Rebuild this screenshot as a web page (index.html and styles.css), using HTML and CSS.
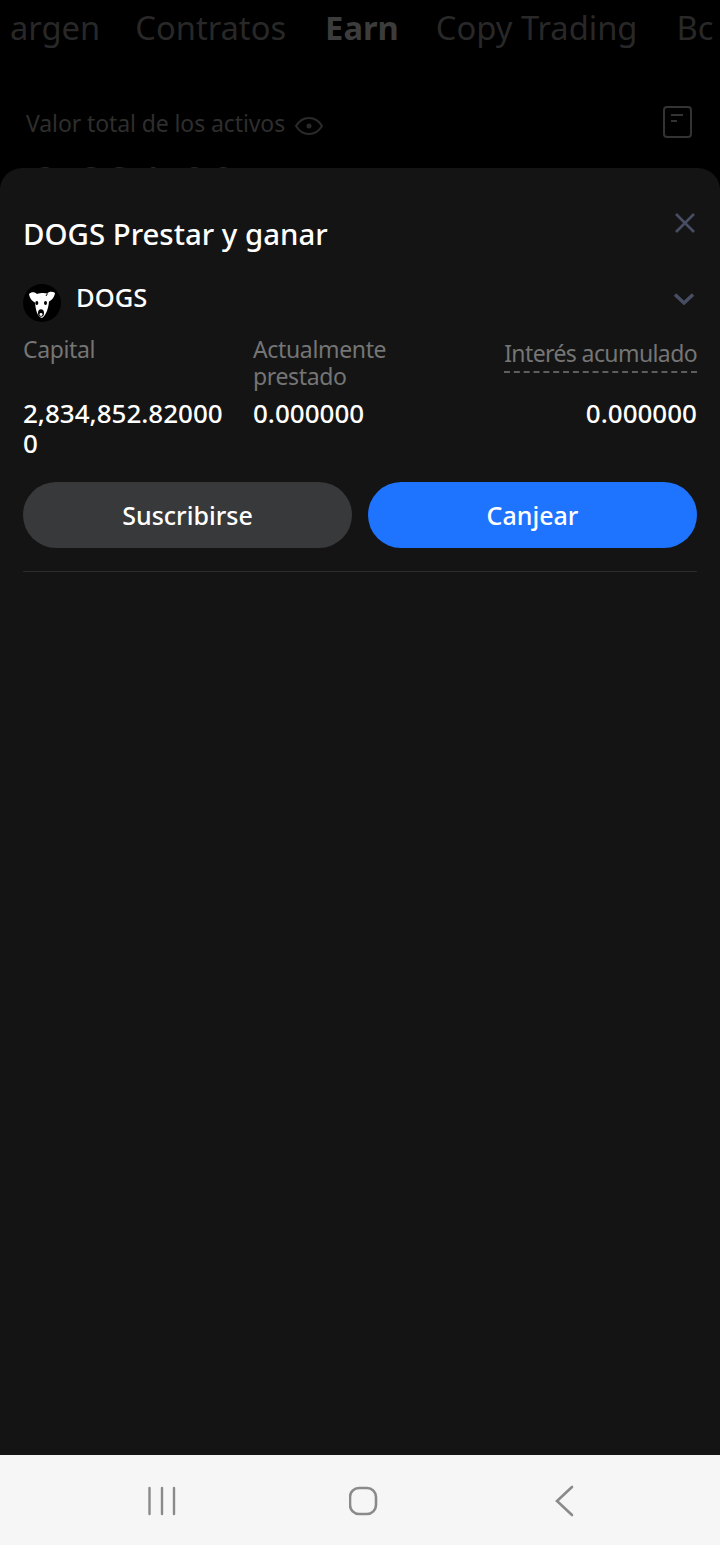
FILE: index.html
```html
<!DOCTYPE html>
<html lang="es">
<head>
  <meta charset="UTF-8">
  <title>DOGS Prestar y ganar</title>
  <link rel="stylesheet" href="styles.css">
</head>
<body>

<div class="screen">

  <!-- fondo oscurecido -->
  <div class="backdrop">
    <div class="tabs">
      <span class="tab-first">argen</span>
      <span>Contratos</span>
      <span class="tab-active">Earn</span>
      <span>Copy Trading</span>
      <span>Bc</span>
    </div>
    <div class="total-row">
      <span class="total-label">Valor total de los activos</span>
      <svg class="eye" width="30" height="22" viewBox="0 0 30 22" fill="none" stroke="#2a2a2a" stroke-width="2">
        <path d="M2 11c3-5 7-8 13-8s10 3 13 8c-3 5-7 8-13 8S5 16 2 11z"/>
        <circle cx="15" cy="11" r="2.5" fill="#2a2a2a" stroke="none"/>
      </svg>
      <svg class="doc" width="30" height="34" viewBox="0 0 30 34" fill="none" stroke="#333" stroke-width="2">
        <rect x="1" y="2" width="27" height="30" rx="3"/>
        <path d="M8 10h12M8 16h6"/>
      </svg>
    </div>
    <div class="balance">2,834.00</div>
  </div>

  <!-- hoja inferior -->
  <div class="sheet">
    <div class="sheet-head">
      <h1>DOGS Prestar y ganar</h1>
      <svg class="close" width="22" height="22" viewBox="0 0 22 22" fill="none" stroke="#474d63" stroke-width="2.6">
        <path d="M2 2l18 18M20 2L2 20"/>
      </svg>
    </div>

    <div class="coin-row">
      <div class="coin-name">
        <svg class="coin" width="38" height="38" viewBox="0 0 38 38">
          <circle cx="19" cy="19" r="19" fill="#000"/>
          <path d="M6 10C8.500 7.500 12 8 14 10c3-1 7-1.500 10-.5 2-2 5.500-2.500 8-.5-.5 4-3.500 7.500-6 8.500-.5 6-2.500 13.500-7 16.500-5-1-6.500-9.500-7-15.500-2.500-1-5.500-4.500-6-8.500z" fill="#fff"/>
          <path d="M24.500 9.500l-1.500 2.500" stroke="#000" stroke-width="1"/>
          <ellipse cx="13.800" cy="19" rx="1.500" ry="2" fill="#000"/>
          <ellipse cx="22.500" cy="19" rx="1.500" ry="2" fill="#000"/>
          <ellipse cx="18" cy="29" rx="3" ry="3.800" fill="#000"/>
          <ellipse cx="18" cy="30.500" rx="1.500" ry="1.400" fill="#fff"/>
        </svg>
        <span>DOGS</span>
      </div>
      <svg class="chevron" width="20" height="12" viewBox="0 0 20 12" fill="none" stroke="#474d63" stroke-width="3.400">
        <path d="M1 1.500l9 8.500 9-8.500"/>
      </svg>
    </div>

    <div class="stats">
      <div class="stat">
        <div class="stat-label">Capital</div>
        <div class="stat-value">2,834,852.820000</div>
      </div>
      <div class="stat">
        <div class="stat-label">Actualmente prestado</div>
        <div class="stat-value">0.000000</div>
      </div>
      <div class="stat stat-right">
        <div class="stat-label"><span class="dashed">Interés acumulado</span></div>
        <div class="stat-value">0.000000</div>
      </div>
    </div>

    <div class="buttons">
      <button class="btn btn-grey">Suscribirse</button>
      <button class="btn btn-blue">Canjear</button>
    </div>

    <div class="divider"></div>
  </div>

  <!-- barra de navegacion -->
  <div class="navbar">
    <svg width="30" height="30" viewBox="0 0 30 30" fill="none" stroke="#8a8a8a" stroke-width="2.400" stroke-linecap="round">
      <path d="M2.500 2v26M15 2v26M27 2v26"/>
    </svg>
    <svg width="30" height="30" viewBox="0 0 30 30" fill="none" stroke="#8a8a8a" stroke-width="2.600">
      <rect x="1" y="2" width="26" height="26" rx="9"/>
    </svg>
    <svg width="30" height="32" viewBox="0 0 30 32" fill="none" stroke="#8a8a8a" stroke-width="2.600" stroke-linecap="round">
      <path d="M22 2L7 16l15 14"/>
    </svg>
  </div>

</div>

</body>
</html>
```

FILE: styles.css
```css
/* base */
body {
  margin: 0;
  font-family: "Noto Sans", "Liberation Sans", sans-serif;
  background: #000;
}
.screen {
  width: 720px;
  height: 1545px;
  display: flex;
  flex-direction: column;
  overflow: hidden;
}

/* fondo oscurecido */
.backdrop {
  height: 168px;
  flex: none;
  background: #000;
  overflow: hidden;
}
.tabs {
  display: flex;
  gap: 39px;
  padding: 6px 0 0 10px;
  height: 47px;
  font-size: 32.7px;
  line-height: 44px;
  color: #282828;
  white-space: nowrap;
}
.tab-first {
  margin-right: -4px;
}
.tab-active {
  font-weight: bold;
  color: #3c3c3c;
  margin-right: -2px;
}
.total-row {
  display: flex;
  align-items: center;
  margin-top: 50px;
  padding: 0 27px 0 26px;
  height: 40px;
}
.total-label {
  font-size: 23px;
  letter-spacing: -0.1px;
  color: #2e2e2e;
}
.eye {
  margin-left: 9px;
  margin-top: 6px;
}
.doc {
  margin-left: auto;
  margin-top: -2px;
}
.balance {
  margin: 13px 0 0 34px;
  font-size: 40px;
  line-height: 50px;
  letter-spacing: 6px;
  color: #262626;
}

/* hoja inferior */
.sheet {
  flex: 1;
  background: #141414;
  border-radius: 22px 22px 0 0;
  padding: 0 23px 0 23px;
  color: #fff;
}
.sheet-head {
  display: flex;
  justify-content: space-between;
  align-items: flex-start;
  padding-top: 44px;
}
.sheet-head h1 {
  margin: 0;
  font-size: 29.4px;
  font-weight: 500;
  line-height: 44px;
}
.close {
  margin: 0 1px 0 0;
}
.coin-row {
  display: flex;
  justify-content: space-between;
  align-items: center;
  margin-top: 22px;
}
.coin-name {
  display: flex;
  align-items: center;
  gap: 15px;
  font-size: 25.5px;
  font-weight: 500;
}
.coin {
  margin: 6px 0 -6px;
}
.chevron {
  margin: 4px 3px 0 0;
}

/* capital / prestado / interes */
.stats {
  display: flex;
  margin-top: 19px;
}
.stat {
  width: 230px;
  flex: none;
}
.stat-right {
  width: auto;
  flex: 1;
  text-align: right;
}
.stat-label {
  font-size: 23px;
  line-height: 27px;
  height: 54px;
  color: #757575;
  padding-top: 1px;
  letter-spacing: -0.35px;
}
.stat-right .stat-label {
  padding-top: 5px;
  height: 50px;
  letter-spacing: -0.6px;
}
.dashed {
  display: inline-block;
  border-bottom: 2px dashed #5e5e5e;
  padding-bottom: 4px;
}
.stat-value {
  width: 206px;
  margin-top: 8px;
  font-size: 26px;
  font-weight: 500;
  line-height: 30px;
  word-break: break-all;
}
.stat-right .stat-value {
  width: auto;
}

/* botones */
.buttons {
  display: flex;
  gap: 16px;
  margin-top: 24px;
}
.btn {
  flex: 1;
  height: 66px;
  border: 0;
  border-radius: 33px;
  color: #fff;
  font-family: inherit;
  font-size: 25px;
  font-weight: 500;
}
.btn-grey {
  background: #38393b;
}
.btn-blue {
  background: #1f74ff;
}
.divider {
  height: 1px;
  margin-top: 23px;
  background: #2a2b2c;
}

/* barra de navegacion */
.navbar {
  height: 90px;
  flex: none;
  background: #f6f6f6;
  display: flex;
  align-items: center;
  justify-content: space-between;
  padding: 2px 140px 0 147px;
  box-sizing: border-box;
}
```
